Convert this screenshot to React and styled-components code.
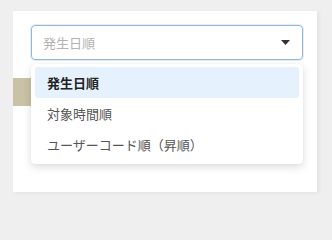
import React, { useState } from "react";
import styled, { createGlobalStyle } from "styled-components";

const GlobalStyle = createGlobalStyle`
  html, body {
    margin: 0;
    padding: 0;
    background: #efefef;
    font-family: "Noto Sans CJK JP", "Noto Sans", sans-serif;
  }
`;

const options = ["発生日順", "対象時間順", "ユーザーコード順（昇順）"];

const App = () => {
  const [selected] = useState(0);

  return (
    <>
      <GlobalStyle />
      <Page>
        <Card>
          <SelectWrap>
            <SelectBox>
              <Placeholder>{options[0]}</Placeholder>
              <Caret width="9" height="5" viewBox="0 0 9 5">
                <path d="M0 0 L9 0 L4.5 5 Z" fill="#333" />
              </Caret>
            </SelectBox>
            <Menu>
              {options.map((curr, index) => (
                <Option key={index} $active={index === selected}>
                  {curr}
                </Option>
              ))}
            </Menu>
          </SelectWrap>
          <Banner />
        </Card>
      </Page>
    </>
  );
};

const Page = styled.div`
  width: 332px;
  height: 204px;
  padding: 11px 15px 12px 13px;
  box-sizing: border-box;
`;

const Card = styled.div`
  background: #fff;
  height: 100%;
  padding-top: 14px;
  box-sizing: border-box;
  box-shadow: 2px 1px 4px rgba(0, 0, 0, 0.06);
`;

const SelectWrap = styled.div`
  position: relative;
  margin: 0 14px 0 18px;
  z-index: 2;
`;

const SelectBox = styled.div`
  height: 35px;
  box-sizing: border-box;
  border: 1px solid #93b7d8;
  border-radius: 4px;
  box-shadow: 0 0 0 1px rgba(147, 183, 216, 0.25);
  display: flex;
  align-items: center;
  justify-content: space-between;
  padding: 0 12px 0 11px;
`;

const Placeholder = styled.span`
  font-size: 13px;
  color: #b3b3b3;
`;

const Caret = styled.svg`
  display: block;
`;

const Menu = styled.ul`
  position: absolute;
  top: 39px;
  left: 0;
  right: 0;
  margin: 0;
  padding: 3px 4px 4px;
  list-style: none;
  background: #fff;
  border-radius: 4px;
  box-shadow: 0 3px 9px rgba(0, 0, 0, 0.14), 0 0 1px rgba(0, 0, 0, 0.1);
`;

const Option = styled.li`
  height: 31px;
  display: flex;
  align-items: center;
  padding: 0 12px;
  font-size: 13px;
  border-radius: 3px;
  color: ${({ $active }) => ($active ? "#222" : "#555")};
  font-weight: ${({ $active }) => ($active ? 700 : 400)};
  background: ${({ $active }) => ($active ? "#e5f1fc" : "transparent")};
`;

const Banner = styled.div`
  margin-top: 18px;
  width: 120px;
  height: 28px;
  background: #c9c2a6;
`;

export default App;
